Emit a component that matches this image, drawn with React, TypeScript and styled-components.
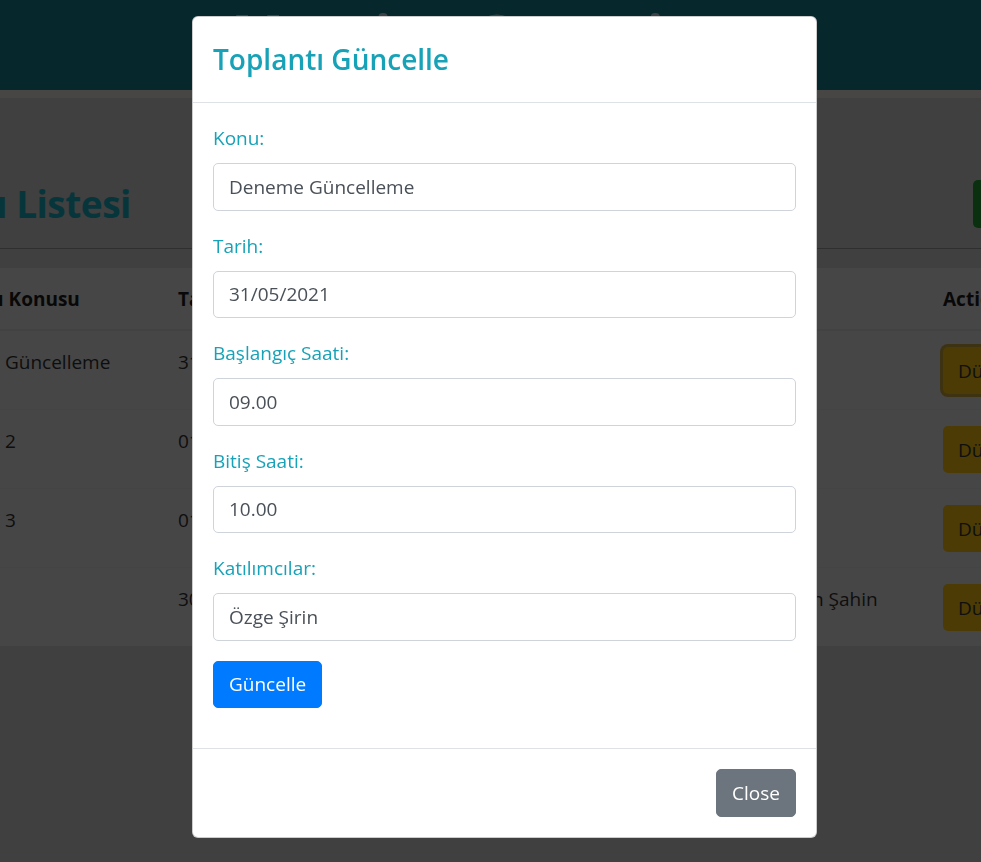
import React from "react";
import styled, { createGlobalStyle } from "styled-components";

const GlobalStyle = createGlobalStyle`
  html, body {
    margin: 0;
    padding: 0;
  }
  body {
    font-family: "Open Sans", "Noto Sans", "Liberation Sans", sans-serif;
    font-size: 19px;
    line-height: 30px;
    color: #222;
    background: #808080;
    overflow: hidden;
  }
  *, *::before, *::after {
    box-sizing: border-box;
  }
`;

const Page = styled.div`
  position: relative;
  width: 981px;
  height: 862px;
  overflow: hidden;
  background: #808080;
`;

const TopBar = styled.header`
  height: 90px;
  padding-top: 5px;
  background: #0c505a;
  color: #74888c;
  text-align: center;
  font-size: 56px;
  font-weight: 700;
  line-height: 1;
  overflow: hidden;
`;

const Strip = styled.div`
  height: 8px;
  background: #908c88;
`;

const Main = styled.main`
  padding-top: 82px;
`;

const TitleRow = styled.div`
  display: flex;
  align-items: center;
  justify-content: space-between;
  height: 48px;
  margin: 0 -150px 0 -142px;
`;

const PageTitle = styled.h2`
  margin: 0;
  font-size: 37px;
  font-weight: 700;
  letter-spacing: -0.5px;
  line-height: 1.2;
  color: #0f6a78;
`;

const AddButton = styled.button`
  width: 158px;
  height: 48px;
  border: none;
  border-radius: 5px;
  background: #166020;
  color: #f0f0f0;
  font: inherit;
`;

const Rule = styled.hr`
  margin: 20px 0 0;
  border: 0;
  border-top: 1px solid #5e5e5e;
`;

const TableSection = styled.section`
  margin-top: 19px;
  background: #8c8c8c;
`;

const Table = styled.table`
  margin-left: -90px;
  border-collapse: collapse;
  table-layout: fixed;
  width: 1255px;
`;

const HeadCell = styled.th`
  padding: 16px 15px 15px;
  text-align: left;
  font-weight: 700;
  color: #111;
  border-bottom: 2px solid #858585;
  white-space: nowrap;
`;

const Cell = styled.td`
  padding: 16px 15px 15px;
  vertical-align: top;
  color: #1c1c1c;
  border-top: 1px solid #888;
  white-space: nowrap;
`;

const EditButton = styled.button<{ $focused?: boolean }>`
  display: block;
  height: 47px;
  padding: 0 15px;
  border: none;
  border-radius: 5px;
  background: #98760a;
  color: #202020;
  font: inherit;
  box-shadow: ${(p) => (p.$focused ? "0 0 0 3px rgba(120, 96, 24, 0.9)" : "none")};
`;

const Backdrop = styled.div`
  position: fixed;
  inset: 0;
  background: rgba(0, 0, 0, 0.5);
`;

const ModalWrap = styled.div`
  position: fixed;
  inset: 0;
  padding: 16px 0 0 192px;
`;

const ModalContent = styled.div`
  width: 625px;
  background: #fff;
  border: 1px solid rgba(0, 0, 0, 0.2);
  border-radius: 6px;
  overflow: hidden;
`;

const ModalHeader = styled.div`
  padding: 20px;
  border-bottom: 1px solid #dee2e6;
`;

const ModalTitle = styled.h4`
  margin: 0;
  font-size: 28px;
  font-weight: 600;
  line-height: 45px;
  color: #17a2b8;
`;

const ModalBody = styled.div`
  padding: 20px 20px 40px;
`;

const FormGroup = styled.div`
  margin-bottom: 20px;
`;

const Label = styled.label`
  display: block;
  margin-bottom: 10px;
  color: #17a2b8;
`;

const Input = styled.input`
  display: block;
  width: 100%;
  height: 47.5px;
  padding: 7px 15px;
  font: inherit;
  color: #495057;
  background: #fff;
  border: 1px solid #ced4da;
  border-radius: 5px;
  outline: none;
`;

const Button = styled.button<{ $variant: "primary" | "secondary" }>`
  height: 47.5px;
  padding: 0 15px;
  font: inherit;
  color: #fff;
  border: 1px solid ${(p) => (p.$variant === "primary" ? "#007bff" : "#6c757d")};
  background: ${(p) => (p.$variant === "primary" ? "#007bff" : "#6c757d")};
  border-radius: 5px;
`;

const ModalFooter = styled.div`
  display: flex;
  justify-content: flex-end;
  padding: 15px;
  border-top: 1px solid #dee2e6;

  & > * {
    margin: 5px;
  }
`;

const meetings = [
  { topic: "Deneme Güncelleme", date: "31/05/2021", start: "09.00", end: "10.00", people: "Özge Şirin" },
  { topic: "Deneme 2", date: "01/06/2021", start: "11.00", end: "12.00", people: "Ali Can" },
  { topic: "Deneme 3", date: "01/06/2021", start: "14.00", end: "15.00", people: "Ayşe Kaya" },
  { topic: "", date: "30/06/2021", start: "10.00", end: "11.00", people: "Özge Şirin, Hakan Şahin" },
];

const fields = [
  { label: "Konu:", value: "Deneme Güncelleme" },
  { label: "Tarih:", value: "31/05/2021" },
  { label: "Başlangıç Saati:", value: "09.00" },
  { label: "Bitiş Saati:", value: "10.00" },
  { label: "Katılımcılar:", value: "Özge Şirin" },
];

export default function App() {
  return (
    <>
      <GlobalStyle />
      <Page>
        <TopBar>Meeting Organizer</TopBar>
        <Strip />
        <Main>
          <TitleRow>
            <PageTitle>Toplantı Listesi</PageTitle>
            <AddButton>Toplantı Ekle</AddButton>
          </TitleRow>
          <Rule />
          <TableSection>
            <Table>
              <colgroup>
                <col style={{ width: 253 }} />
                <col style={{ width: 170 }} />
                <col style={{ width: 150 }} />
                <col style={{ width: 170 }} />
                <col style={{ width: 275 }} />
                <col style={{ width: 237 }} />
              </colgroup>
              <thead>
                <tr>
                  <HeadCell>Toplantı Konusu</HeadCell>
                  <HeadCell>Tarih</HeadCell>
                  <HeadCell>Başlangıç</HeadCell>
                  <HeadCell>Bitiş</HeadCell>
                  <HeadCell>Katılımcılar</HeadCell>
                  <HeadCell>Actions</HeadCell>
                </tr>
              </thead>
              <tbody>
                {meetings.map((m, i) => (
                  <tr key={i}>
                    <Cell>{m.topic}</Cell>
                    <Cell>{m.date}</Cell>
                    <Cell>{m.start}</Cell>
                    <Cell>{m.end}</Cell>
                    <Cell>{m.people}</Cell>
                    <Cell>
                      <EditButton $focused={i === 0}>Düzenle</EditButton>
                    </Cell>
                  </tr>
                ))}
              </tbody>
            </Table>
          </TableSection>
        </Main>
        <Backdrop />
        <ModalWrap>
          <ModalContent>
            <ModalHeader>
              <ModalTitle>Toplantı Güncelle</ModalTitle>
            </ModalHeader>
            <ModalBody>
              {fields.map((f) => (
                <FormGroup key={f.label}>
                  <Label>{f.label}</Label>
                  <Input defaultValue={f.value} />
                </FormGroup>
              ))}
              <Button $variant="primary">Güncelle</Button>
            </ModalBody>
            <ModalFooter>
              <Button $variant="secondary">Close</Button>
            </ModalFooter>
          </ModalContent>
        </ModalWrap>
      </Page>
    </>
  );
}
